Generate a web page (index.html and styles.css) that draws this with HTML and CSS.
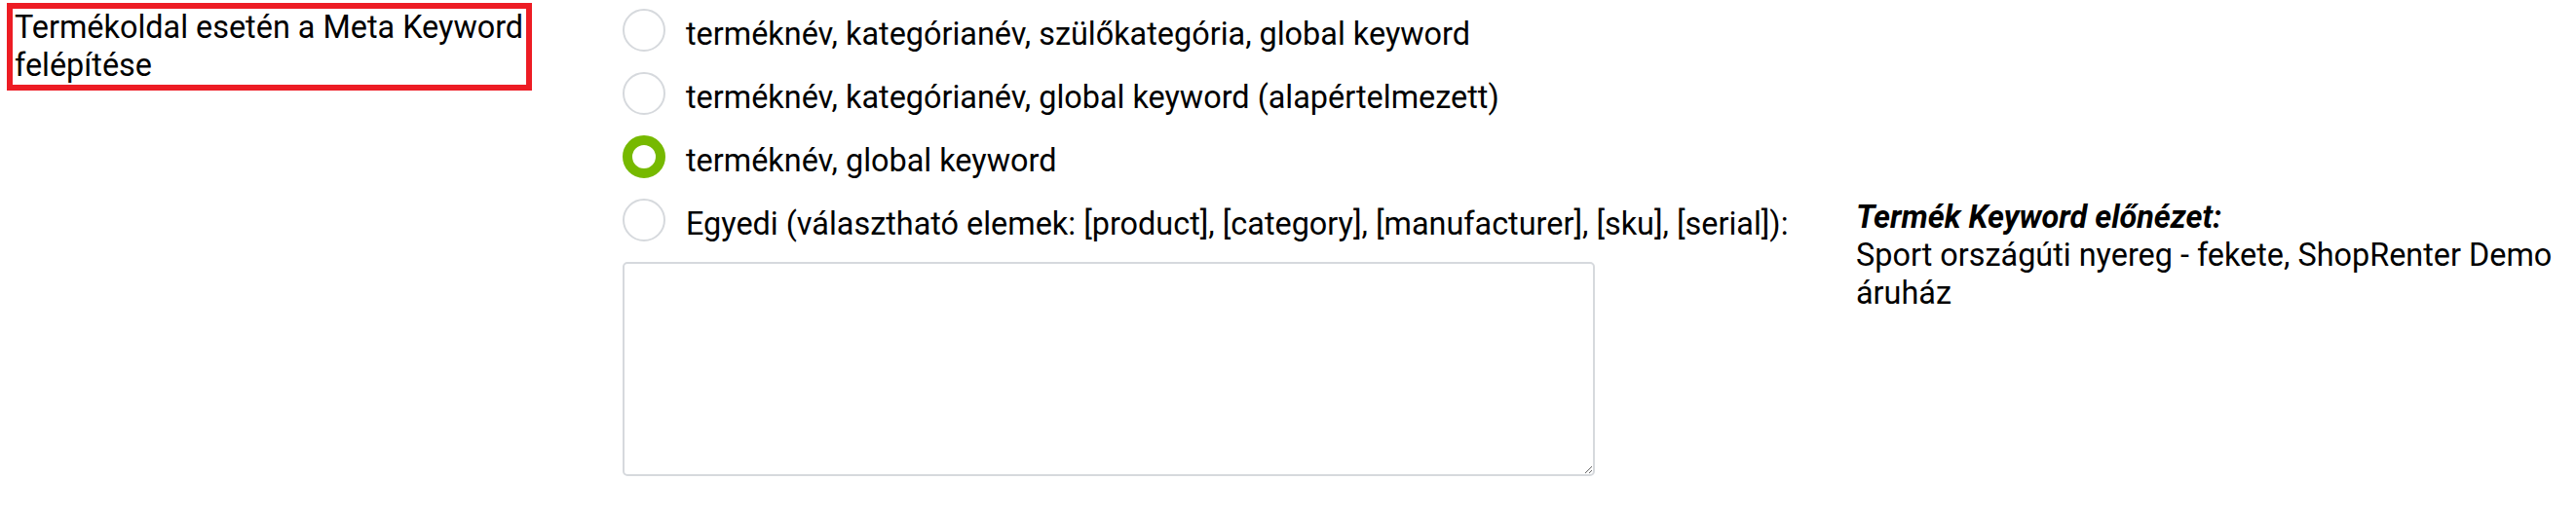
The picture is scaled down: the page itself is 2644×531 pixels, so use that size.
FILE: index.html
```html
<!DOCTYPE html>
<html lang="hu">
<head>
  <meta charset="UTF-8" />
  <title>Meta Keyword beállítás</title>
  <link rel="stylesheet" href="styles.css">
</head>
<body>
  <div class="setting-row">
    <div class="setting-label">
      <span class="highlight">Termékoldal esetén a Meta Keyword felépítése</span>
    </div>

    <div class="setting-field">
      <label class="radio-row">
        <input type="radio" name="keyword_mode" value="1">
        <span class="radio-text">terméknév, kategórianév, szülőkategória, global keyword</span>
      </label>
      <label class="radio-row">
        <input type="radio" name="keyword_mode" value="2">
        <span class="radio-text">terméknév, kategórianév, global keyword (alapértelmezett)</span>
      </label>
      <label class="radio-row">
        <input type="radio" name="keyword_mode" value="3" checked>
        <span class="radio-text">terméknév, global keyword</span>
      </label>

      <!-- custom pattern + preview -->
      <div class="custom-row">
        <div class="custom-left">
          <label class="radio-row">
            <input type="radio" name="keyword_mode" value="4">
            <span class="radio-text">Egyedi (választható elemek: [product], [category], [manufacturer], [sku], [serial]):</span>
          </label>
          <textarea class="custom-pattern"></textarea>
        </div>
        <div class="preview">
          <div class="preview-title">Termék Keyword előnézet:</div>
          <div class="preview-text">Sport országúti nyereg - fekete, ShopRenter Demo áruház</div>
        </div>
      </div>
    </div>
  </div>
</body>
</html>
```

FILE: styles.css
```css
body {
  margin: 0;
  font-family: Roboto, "Noto Sans", Arial, sans-serif;
  font-size: 32.4px;
  line-height: 39px;
  color: #000;
  background: #fff;
}
.setting-row {
  display: flex;
  align-items: flex-start;
  padding: 3px 0 0 7px;
}
.setting-label {
  flex: 0 0 632px;
}
.highlight {
  display: block;
  width: 539px;
  box-sizing: border-box;
  border: 6px solid #ed1c24;
  padding-left: 2px;
}
.setting-field {
  flex: 1;
  display: flex;
  flex-direction: column;
  gap: 21px;
  padding-top: 6px;
}
.radio-row {
  display: flex;
  align-items: center;
  gap: 21px;
  height: 44px;
  cursor: pointer;
}
.radio-row input[type="radio"] {
  appearance: none;
  -webkit-appearance: none;
  flex: 0 0 44px;
  width: 44px;
  height: 44px;
  margin: 0;
  box-sizing: border-box;
  border: 2px solid #d6d9dd;
  border-radius: 50%;
  background: #fff;
}
.radio-row input[type="radio"]:checked {
  border: 10px solid #76b900;
}
.radio-text {
  line-height: 30px;
  padding-top: 7px;
  white-space: nowrap;
}
.custom-row {
  display: flex;
  align-items: flex-start;
}
.custom-left {
  flex: 0 0 1266px;
  display: flex;
  flex-direction: column;
  gap: 21px;
}
.custom-pattern {
  width: 998px;
  height: 220px;
  box-sizing: border-box;
  border: 2px solid #d6d9dd;
  border-radius: 5px;
  margin: 0;
  font-family: inherit;
  font-size: 28px;
  resize: both;
}
.preview {
  flex: 1;
  padding-right: 8px;
}
.preview-title {
  font-weight: bold;
  font-style: italic;
}
```
